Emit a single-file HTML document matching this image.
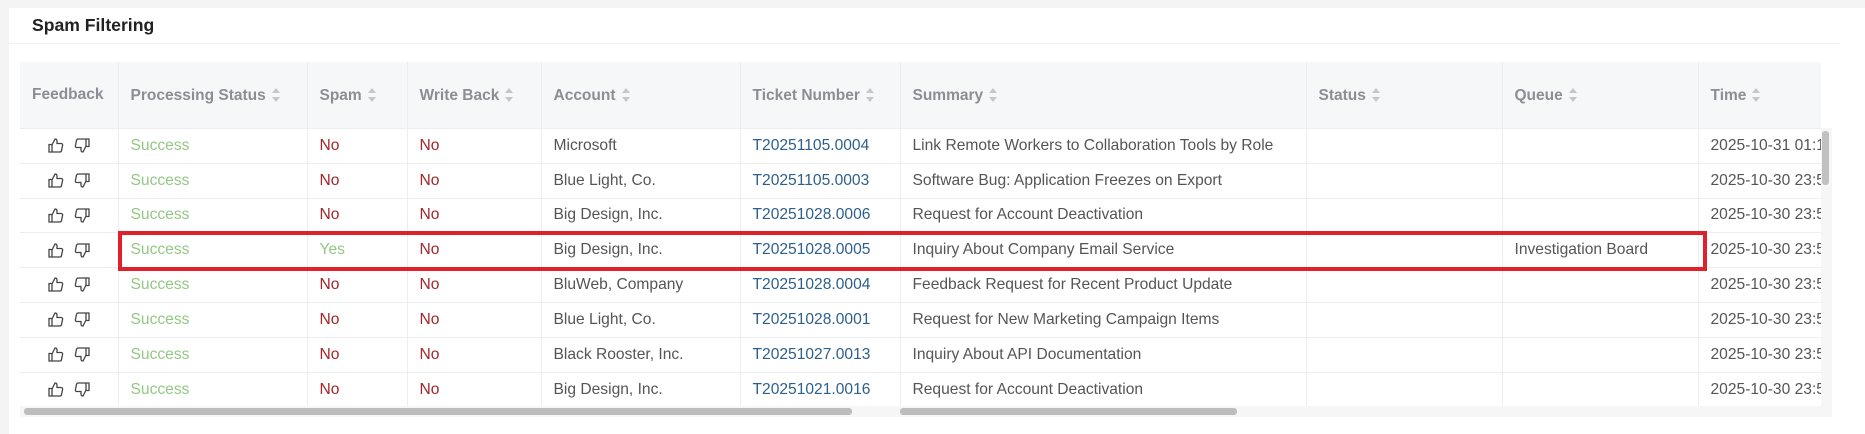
<!DOCTYPE html>
<html><head><meta charset="utf-8"><style>
*{margin:0;padding:0;box-sizing:border-box}
body{width:1865px;height:434px;background:#fff;font-family:"Liberation Sans",sans-serif;position:relative;overflow:hidden}
.bgtop{position:absolute;left:0;top:0;width:1865px;height:8px;background:#f4f4f4}
.bgleft{position:absolute;left:0;top:0;width:9px;height:434px;background:#f4f4f4}
.title{position:absolute;left:32px;top:15px;font-size:17.6px;font-weight:bold;color:#222}
.sep{position:absolute;left:9px;top:43px;width:1831px;height:1px;background:#eef0f2}
.wrap{position:absolute;left:20px;top:62px;width:1801px;height:344px;overflow:hidden}
table{border-collapse:collapse;table-layout:fixed;width:1830px}
th{height:66px;background:#f6f7f9;color:#8b8e95;font-size:15.5px;text-align:left;padding-left:12px;border-right:1px solid #eceef1;font-weight:bold;white-space:nowrap}
td{height:34.8px;font-size:15.6px;color:#555;padding-left:12px;border-right:1px solid #eceef1;border-top:1px solid #eceef1;white-space:nowrap;overflow:hidden}
.s{display:inline-block;width:8px;height:14px;position:relative;top:2px;margin-left:6px}
.s:before{content:"";position:absolute;left:0;top:0;border:4px solid transparent;border-bottom:5px solid #c4c7cc;border-top:0}
.s:after{content:"";position:absolute;left:0;bottom:0;border:4px solid transparent;border-top:5px solid #c4c7cc;border-bottom:0}
.ok{color:#93c783}.no{color:#a2252a}.yes{color:#93c783}.tk{color:#2c5f8c}
.fb{padding-left:0;text-align:center}
.fb svg{vertical-align:middle;margin:0 5px}
.red{position:absolute;left:118px;top:231px;width:1589px;height:40px;border:4px solid #e0212c}
.vs{position:absolute;left:1821px;top:128px;width:11px;height:278px;background:#f6f6f6}
.vt{position:absolute;left:1822px;top:131px;width:7px;height:54px;background:#c1c1c1;border-radius:3px}
.hs1{position:absolute;left:24px;top:408px;width:828px;height:7px;background:#bdbdbd;border-radius:3px}
.hs2{position:absolute;left:900px;top:408px;width:337px;height:7px;background:#bdbdbd;border-radius:3px}
.hb{position:absolute;left:20px;top:406px;width:1812px;height:11px;background:#f6f6f6}
</style></head><body>
<div class="bgtop"></div><div class="bgleft"></div>
<div class="title">Spam Filtering</div>
<div class="sep"></div>
<div class="hb"></div>
<div class="wrap"><table>
<colgroup><col style="width:98px"><col style="width:189px"><col style="width:100px"><col style="width:134px"><col style="width:199px"><col style="width:160px"><col style="width:406px"><col style="width:196px"><col style="width:196px"><col style="width:152px"></colgroup>
<tr><th>Feedback</th><th>Processing Status<span class="s"></span></th><th>Spam<span class="s"></span></th><th>Write Back<span class="s"></span></th><th>Account<span class="s"></span></th><th>Ticket Number<span class="s"></span></th><th>Summary<span class="s"></span></th><th>Status<span class="s"></span></th><th>Queue<span class="s"></span></th><th>Time<span class="s"></span></th></tr>
</table></div>
<div class="wrap" style="top:128px;height:278px"><table id="b">
<colgroup><col style="width:98px"><col style="width:189px"><col style="width:100px"><col style="width:134px"><col style="width:199px"><col style="width:160px"><col style="width:406px"><col style="width:196px"><col style="width:196px"><col style="width:152px"></colgroup>
<tr><td class="fb">U D</td><td class="ok">Success</td><td class="no">No</td><td class="no">No</td><td>Microsoft</td><td class="tk">T20251105.0004</td><td>Link Remote Workers to Collaboration Tools by Role</td><td></td><td></td><td>2025-10-31 01:15</td></tr>
<tr><td class="fb">U D</td><td class="ok">Success</td><td class="no">No</td><td class="no">No</td><td>Blue Light, Co.</td><td class="tk">T20251105.0003</td><td>Software Bug: Application Freezes on Export</td><td></td><td></td><td>2025-10-30 23:58</td></tr>
<tr><td class="fb">U D</td><td class="ok">Success</td><td class="no">No</td><td class="no">No</td><td>Big Design, Inc.</td><td class="tk">T20251028.0006</td><td>Request for Account Deactivation</td><td></td><td></td><td>2025-10-30 23:58</td></tr>
<tr><td class="fb">U D</td><td class="ok">Success</td><td class="yes">Yes</td><td class="no">No</td><td>Big Design, Inc.</td><td class="tk">T20251028.0005</td><td>Inquiry About Company Email Service</td><td></td><td>Investigation Board</td><td>2025-10-30 23:58</td></tr>
<tr><td class="fb">U D</td><td class="ok">Success</td><td class="no">No</td><td class="no">No</td><td>BluWeb, Company</td><td class="tk">T20251028.0004</td><td>Feedback Request for Recent Product Update</td><td></td><td></td><td>2025-10-30 23:58</td></tr>
<tr><td class="fb">U D</td><td class="ok">Success</td><td class="no">No</td><td class="no">No</td><td>Blue Light, Co.</td><td class="tk">T20251028.0001</td><td>Request for New Marketing Campaign Items</td><td></td><td></td><td>2025-10-30 23:58</td></tr>
<tr><td class="fb">U D</td><td class="ok">Success</td><td class="no">No</td><td class="no">No</td><td>Black Rooster, Inc.</td><td class="tk">T20251027.0013</td><td>Inquiry About API Documentation</td><td></td><td></td><td>2025-10-30 23:58</td></tr>
<tr><td class="fb">U D</td><td class="ok">Success</td><td class="no">No</td><td class="no">No</td><td>Big Design, Inc.</td><td class="tk">T20251021.0016</td><td>Request for Account Deactivation</td><td></td><td></td><td>2025-10-30 23:58</td></tr>
</table></div>
<div class="vs"></div><div class="vt"></div>
<div class="hs1"></div><div class="hs2"></div>
<div class="red"></div>
<script>
var up='<svg width="16" height="15" viewBox="0 0 16 15" fill="none" stroke="#444" stroke-width="1.3"><path d="M1 6.5h3v7.5H1zM4 7l3-6c1.3 0 2 .8 2 2v2.5h4.2c1 0 1.6.8 1.4 1.8l-1.1 5.3c-.2.9-.8 1.4-1.6 1.4H4"/></svg>';
var dn='<svg width="16" height="15" viewBox="0 0 16 15" fill="none" stroke="#444" stroke-width="1.3"><path d="M15 8.5h-3V1h3zM12 8l-3 6c-1.3 0-2-.8-2-2V9.5H2.8c-1 0-1.6-.8-1.4-1.8l1.1-5.3C2.7 1.5 3.3 1 4.1 1H12"/></svg>';
document.querySelectorAll('.fb').forEach(function(e){if(e.tagName=='TD')e.innerHTML=up+dn;});
</script>
</body></html>
